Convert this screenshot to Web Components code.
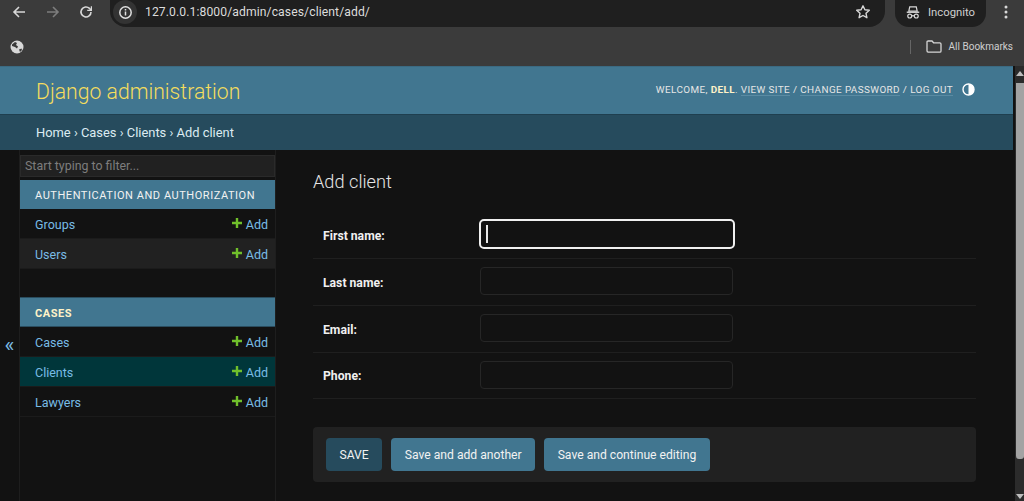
<!DOCTYPE html>
<html lang="en"><head><meta charset="utf-8"><title>Add client</title>
<style>
html,body{margin:0;height:100%;overflow:hidden;background:#121212}
body{width:1024px;height:501px;display:flex;flex-direction:column;font-family:Roboto,"Noto Sans",sans-serif}
</style></head><body>
<browser-toolbar url="127.0.0.1:8000/admin/cases/client/add/"></browser-toolbar>
<bookmarks-bar></bookmarks-bar>
<admin-page>
  <admin-header slot="header"></admin-header>
  <admin-crumbs slot="header"></admin-crumbs>
  <admin-sidebar slot="side">
    <app-group title="AUTHENTICATION AND AUTHORIZATION">
      <model-row name="Groups"></model-row>
      <model-row name="Users" alt></model-row>
    </app-group>
    <app-group title="CASES" current>
      <model-row name="Cases"></model-row>
      <model-row name="Clients" selected></model-row>
      <model-row name="Lawyers"></model-row>
    </app-group>
  </admin-sidebar>
  <client-form slot="main"></client-form>
</admin-page>
<script>
const def=(n,html)=>customElements.define(n,class extends HTMLElement{
  connectedCallback(){ if(this.shadowRoot)return; const r=this.attachShadow({mode:'open'}); r.innerHTML=typeof html==='function'?html(this):html; }
});
const FONT='Roboto,"Noto Sans",sans-serif';
def('browser-toolbar',el=>`<style>
:host{display:flex;align-items:flex-start;height:27px;background:#3b3b3b;color:#d6d6d6;flex:none}
.nav{display:flex;align-items:center;height:24px;padding-left:11px;gap:17.5px;width:110px;box-sizing:border-box}
svg{display:block;flex:none}
.omni{width:775px;height:27px;background:#1f1f1f;border-radius:0 0 16px 16px;display:flex;align-items:center;box-sizing:border-box;padding:0 14px 3px 3px}
.info{width:24px;height:24px;border-radius:50%;background:#333;display:grid;place-items:center}
.url{font:12.15px ${FONT};color:#dcdcdc;margin-left:8px;flex:1;letter-spacing:.1px;white-space:nowrap}
.inc{margin-left:10px;width:91px;height:27px;background:#1f1f1f;border-radius:0 0 14px 14px;display:flex;align-items:center;box-sizing:border-box;padding:0 0 3px 11px;gap:8px;font:11.3px ${FONT};color:#cfcfcf}
.more{margin-left:18px;height:24px;display:flex;align-items:center}
</style>
<div class="nav">
<svg width="16" height="16" viewBox="0 0 16 16" fill="none" stroke="#d8d8d8" stroke-width="1.6"><path d="M14 8H3M8 3 3 8l5 5"/></svg>
<svg width="16" height="16" viewBox="0 0 16 16" fill="none" stroke="#7d7d7d" stroke-width="1.6"><path d="M2 8h11M8 3l5 5-5 5"/></svg>
<svg width="16" height="16" viewBox="0 0 16 16" fill="none" stroke="#d8d8d8" stroke-width="1.6"><path d="M13 8a5 5 0 1 1-1.5-3.600L13 6"/><path d="M13.400 2.200v4.200H9.200" stroke-width="1.200"/></svg>
</div>
<div class="omni"><span class="info"><svg width="15" height="15" viewBox="0 0 15 15" fill="none" stroke="#e0e0e0" stroke-width="1.5"><circle cx="7.5" cy="7.5" r="5.7"/><path d="M7.500 6.600v4M7.500 4v1.600"/></svg></span>
<span class="url">${el.getAttribute('url')}</span>
<svg width="16" height="16" viewBox="0 0 16 16" fill="none" stroke="#d8d8d8" stroke-width="1.400" stroke-linejoin="round"><path d="M8 1.800l1.900 4 4.400.5-3.300 3 .9 4.400L8 11.500l-3.900 2.200.9-4.400-3.300-3 4.400-.5z"/></svg></div>
<div class="inc"><svg width="14" height="15" viewBox="0 0 15 15" fill="none" stroke="#d8d8d8" stroke-width="1.300"><path d="M4 1.500h7l1 4.500H3z"/><path d="M.8 7.200h13.400" stroke-width="1.500"/><circle cx="4" cy="11.300" r="2.100"/><circle cx="11" cy="11.300" r="2.100"/><path d="M6 11h3"/></svg><span>Incognito</span></div>
<div class="more"><svg width="4" height="14" viewBox="0 0 4 14" fill="#d8d8d8"><circle cx="2" cy="2" r="1.500"/><circle cx="2" cy="7" r="1.500"/><circle cx="2" cy="12" r="1.500"/></svg></div>`);
def('bookmarks-bar',`<style>
:host{display:flex;align-items:center;height:39px;background:#3b3b3b;flex:none;padding:0 11px 0 10px;box-sizing:border-box;font:10px ${FONT};color:#cfcfcf}
svg{display:block}.sp{flex:1}.sep{width:1px;height:14px;background:#666;margin-right:15px}
.f{margin-right:7px}
</style>
<svg width="14" height="14" viewBox="0 0 14 14"><circle cx="7" cy="7" r="6.500" fill="#d8d8d8"/><path d="M2 4.500l3-2.500 2 1-1 2 2 1.500-1 2-2-1.500-3-1zM9 9.500l2.500-1 .5 1.500-2 2z" fill="#3b3b3b"/></svg>
<span class="sp"></span><span class="sep"></span>
<svg class="f" width="16" height="13" viewBox="0 0 16 13" fill="none" stroke="#d6d6d6" stroke-width="1.300"><path d="M1 2.200q0-1.200 1.200-1.200H6l1.600 1.800h6.200q1.200 0 1.200 1.200v7q0 1.200-1.200 1.200H2.200Q1 12 1 10.800z"/></svg>
<span>All Bookmarks</span>`);
def('admin-page',`<style>
:host{display:flex;flex:1;min-height:0;position:relative;background:#121212}
.col{flex:1;min-width:0;display:flex;flex-direction:column}
.body{flex:1;display:flex;min-height:0}
.toggle{width:20px;flex:none;display:flex;align-items:center;justify-content:center;color:#7dbde6;font:21px ${FONT};padding-top:39px;padding-right:1px;box-sizing:border-box}
.bar{width:11px;flex:none;background:#2b2b2b;display:flex;flex-direction:column;align-items:flex-end;box-sizing:border-box;padding-left:2px;box-shadow:inset 2px 0 0 #121212}
.thumb{width:8px;flex:1;background:#a3a3a3;border-radius:0 0 3px 3px;margin:7px 0 35px}
.up,.dn{width:0;height:0;border-left:4px solid transparent;border-right:4px solid transparent}
.up{border-bottom:5px solid #bdbdbd;margin-top:5px}.dn{border-top:5px solid #bdbdbd;margin-bottom:2px}
</style>
<div class="col"><slot name="header"></slot>
<div class="body"><div class="toggle">«</div><slot name="side"></slot><slot name="main"></slot></div></div>
<div class="bar"><i class="up"></i><i class="thumb"></i><i class="dn"></i></div>`);
def('admin-header',`<style>
:host{display:flex;align-items:center;justify-content:space-between;height:48px;background:#417690;padding:0 38px 2px 36px;box-sizing:border-box;flex:none;border-top:1px solid #3b6a82}
.t{font:300 21.200px ${FONT};color:#f5dd5d;margin-top:3px}
.u{display:flex;align-items:center;font:9.900px ${FONT};color:#e6e6e6;letter-spacing:.4px;white-space:nowrap}
b{color:#fff3c8;font-weight:700}
a{color:inherit;border-bottom:1px solid #5a8ba3}
svg{margin-left:9px;display:block}
</style><div class="t">Django administration</div>
<div class="u"><span>WELCOME, <b>DELL</b>.&nbsp;<a>VIEW SITE</a> / <a>CHANGE PASSWORD</a> / <a>LOG OUT</a></span>
<svg width="13" height="13" viewBox="0 0 13 13"><circle cx="6.500" cy="6.500" r="5.500" fill="none" stroke="#fff" stroke-width="1.400"/><path d="M6.500 1a5.500 5.500 0 0 1 0 11z" fill="#fff"/></svg></div>`);
def('admin-crumbs',`<style>
:host{display:flex;align-items:center;height:36px;background:#264b5d;padding:0 0 1px 36px;box-sizing:border-box;flex:none;font:12.900px ${FONT};color:#dcebf2;border-top:1px solid #1f3f4f}
</style><span>Home › Cases › Clients › Add client</span>`);
def('admin-sidebar',`<style>
:host{display:block;width:257px;flex:none;border-right:1px solid #1e1e1e;border-left:1px solid #1e1e1e;box-sizing:border-box;padding-top:5px;margin-left:-1px}
.f{display:block;box-sizing:border-box;height:22px;width:100%;background:#212121;border:1px solid #2a2a2a;color:#7d7d7d;font:12.400px/16px ${FONT};padding:2px 4px;margin-bottom:3px}
</style><div class="f">Start typing to filter...</div><slot></slot>`);
def('app-group',el=>`<style>
:host{display:block;margin-bottom:28px}
.h{height:29px;display:flex;align-items:center;background:#417690;color:#f2f2f2;font:11px ${FONT};letter-spacing:.55px;padding:2px 0 0 15px;box-sizing:border-box;${el.hasAttribute('current')?'font-weight:700;color:#fff3c8;height:30px;border-top:1px solid #2a4d5f;border-bottom:1px solid #2a4d5f;':''}}
</style><div class="h">${el.getAttribute('title')}</div><slot></slot>`);
def('model-row',el=>`<style>
:host{display:flex;align-items:center;justify-content:space-between;height:30px;box-sizing:border-box;padding:2px 7px 0 15px;border-bottom:1px solid #1b1b1b;font:12.500px ${FONT};color:#79bce6;background:${el.hasAttribute('selected')?'#00363a':el.hasAttribute('alt')?'#212121':'#121212'}}
.a{display:flex;align-items:center;gap:4px}svg{display:block;margin-top:-4px}
</style><span>${el.getAttribute('name')}</span><span class="a"><svg width="10" height="10" viewBox="0 0 10 10" fill="#70bf2b"><path d="M3.800 0h2.400v3.800H10v2.400H6.200V10H3.800V6.200H0V3.800h3.800z"/></svg>Add</span>`);
def('form-row',el=>`<style>
:host{display:flex;align-items:center;height:47px;border-bottom:1px solid #1f1f1f;box-sizing:border-box;padding:0 0 2px 10px;font:700 12.200px ${FONT};color:#f0f0f0}
label{width:157px;flex:none;margin-top:3px}
.i{width:253px;height:28px;box-sizing:border-box;border:1px solid #262626;border-radius:4px;background:#121212;display:flex;align-items:center;padding-left:5px}
:host([focused]) .i{width:256px;height:30px;margin-left:-1px;border:2px solid #f0f0f0;border-radius:5px}
.c{width:1.500px;height:18px;background:#e8e8e8}
</style><label>${el.getAttribute('label')}:</label><div class="i">${el.hasAttribute('focused')?'<i class="c"></i>':''}</div>`);
def('form-button',el=>`<style>
:host{display:flex;align-items:center;height:33px;padding:0 13.500px;border-radius:4px;background:${el.hasAttribute('default')?'#264b5d':'#417690'};color:#f2f2f2;font:12.150px ${FONT};white-space:nowrap;box-sizing:border-box}
</style><slot></slot>`);
def('client-form',`<style>
:host{display:block;flex:1;min-width:0;padding:0 37px;box-sizing:border-box;color:#f0f0f0}
h1{margin:0;font:300 18.200px/24px ${FONT};color:#e6e6e6;padding-top:20px;height:62px;box-sizing:border-box}
.sub{margin-top:28px;height:55px;background:#212121;border-radius:4px;display:flex;align-items:center;gap:9px;padding:0 13px;box-sizing:border-box}
form-row:last-child{height:46px}
</style><h1>Add client</h1>
<div class="rows"><form-row label="First name" focused></form-row><form-row label="Last name"></form-row><form-row label="Email"></form-row><form-row label="Phone"></form-row></div>
<div class="sub"><form-button default>SAVE</form-button><form-button>Save and add another</form-button><form-button>Save and continue editing</form-button></div>`);
</script>
</body></html>
